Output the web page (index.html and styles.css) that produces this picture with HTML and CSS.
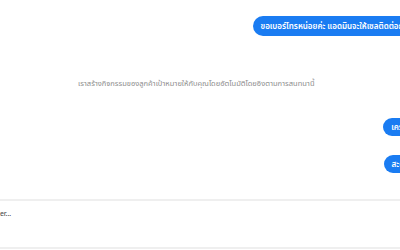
FILE: index.html
```html
<!DOCTYPE html>
<html>
<head>
    <title>Chat</title>
    <link rel="stylesheet" href="styles.css">
</head>
<body>
    <div class="chat">
        <div class="messages">
            <div class="bubble first">ขอเบอร์โทรหน่อยค่ะ แอดมินจะให้เซลติดต่อกลับค่ะ</div>
            <div class="note">เราสร้างกิจกรรมของลูกค้าเป้าหมายให้กับคุณโดยอัตโนมัติโดยอิงตามการสนทนานี้</div>
            <div class="bubble second">เครดิตค่ะ</div>
            <div class="bubble third">สะดวกค่ะ</div>
        </div>
        <div class="composer">
            <div class="composer-input">Type a message to the customer...</div>
        </div>
        <div class="composer-footer"></div>
    </div>
</body>
</html>
```

FILE: styles.css
```css
body {
    margin: 0;
    width: 400px;
    height: 250px;
    overflow: hidden;
    background: #fff;
    font-family: "Noto Sans", "Noto Sans Thai", "DejaVu Sans", sans-serif;
    font-size: 8px;
}

.chat {
    width: 560px;
    margin-left: -120px;
}

.messages {
    height: 199px;
    display: flex;
    flex-direction: column;
    align-items: flex-end;
    padding: 16px 11px 0 0;
    box-sizing: border-box;
}

.bubble {
    background: #1a7cf2;
    color: #fff;
    border-radius: 10px;
    padding: 0 8px;
    white-space: nowrap;
    font-weight: 600;
    display: flex;
    align-items: center;
}

.first {
    height: 20px;
}

.note {
    align-self: flex-start;
    margin: 42px 0 0 198px;
    color: #8c8c8c;
    font-size: 7.5px;
    white-space: nowrap;
}

.second {
    height: 18px;
    margin-top: 29px;
}

.third {
    height: 18px;
    margin-top: 19px;
}

.composer {
    border-top: 2px solid #efefef;
    border-bottom: 2px solid #efefef;
    height: 38px;
    padding: 8px 0 0 0;
    box-sizing: content-box;
}

.composer-input {
    color: #444;
    font-size: 7px;
    margin-left: 20px;
}

.composer-footer {
    height: 8px;
    border-top: 1px solid #eef3f8;
    margin-top: 2px;
}
```
